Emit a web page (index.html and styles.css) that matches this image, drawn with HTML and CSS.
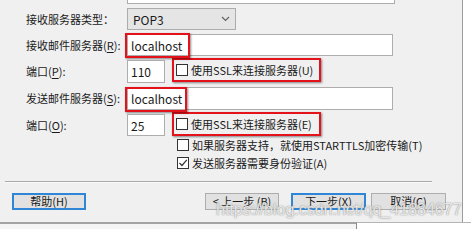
FILE: index.html
```html
<!DOCTYPE html>
<html lang="zh-CN">
<head>
<meta charset="utf-8">
<title>账户设置</title>
<link rel="stylesheet" href="styles.css">
</head>
<body>
<div class="screen">
  <div class="dialog">
    <div class="stub"></div>
    <div class="form">
      <div class="label">接收服务器类型：</div>
      <div class="ctrl">
        <div class="select"><span>POP3</span>
          <svg class="chev" width="9" height="6" viewBox="0 0 9 6"><polyline points="1,1 4.5,4.5 8,1" fill="none" stroke="#606060" stroke-width="1.1"/></svg>
        </div>
      </div>

      <div class="label">接收邮件服务器(<u>R</u>):</div>
      <div class="ctrl">
        <div class="input wide"><span>localhost</span><i class="mark"></i></div>
      </div>

      <div class="label">端口(<u>P</u>):</div>
      <div class="ctrl">
        <div class="input port"><span>110</span></div>
        <div class="cbox hl"><span class="box"></span><span>使用SSL来连接服务器(U)</span></div>
      </div>

      <div class="label">发送邮件服务器(<u>S</u>):</div>
      <div class="ctrl">
        <div class="input wide"><span>localhost</span><i class="mark m2"></i></div>
      </div>

      <div class="label">端口(<u>O</u>):</div>
      <div class="ctrl">
        <div class="input port"><span>25</span></div>
        <div class="cbox hl"><span class="box"></span><span>使用SSL来连接服务器(E)</span></div>
      </div>

      <div class="ctrl span2">
        <div class="cbox plain"><span class="box"></span><span>如果服务器支持，就使用STARTTLS加密传输(T)</span></div>
      </div>
      <div class="ctrl span2">
        <div class="cbox plain"><span class="box checked"><svg width="10" height="10" viewBox="0 0 10 10"><polyline points="1.5,5 4,7.5 8.8,1.8" fill="none" stroke="#333" stroke-width="1.2"/></svg></span><span>发送服务器需要身份验证(A)</span></div>
      </div>
    </div>

    <div class="sep"></div>

    <div class="buttons">
      <div class="btn focus">帮助(H)</div>
      <div class="group">
        <div class="btn">&lt; 上一步 (B)</div>
        <div class="btn focus next">下一步(X)</div>
        <div class="btn">取消(C)</div>
      </div>
    </div>

    <div class="watermark">https://blog.csdn.net/qq_41884677</div>
  </div>
  <div class="taskbar"><div class="tleft"></div><div class="tright"></div></div>
</div>
</body>
</html>
```
FILE: styles.css
```css
html, body {
  margin: 0;
  padding: 0;
  background: #ffffff;
}
.screen {
  width: 471px;
  height: 229px;
  overflow: hidden;
  font-family: "Noto Sans CJK SC", "Microsoft YaHei", sans-serif;
  font-size: 11px;
  color: #1a1a1a;
}
.dialog {
  position: relative;
  width: 463px;
  height: 222px;
  box-sizing: border-box;
  background: #f0f0f0;
  border-right: 1px solid #9c9c9c;
  overflow: hidden;
}
.stub {
  margin-left: 127px;
  width: 266px;
  height: 3px;
  background: #fff;
  border: 1px solid #adadad;
  border-top: none;
}
.form {
  margin-top: 4px;
  padding-left: 26px;
  display: grid;
  grid-template-columns: 101px 1fr;
  grid-template-rows: 22px 22px 23px 23px 22px 10px 18px;
  row-gap: 4px;
}
.form .span2 {
  grid-column: 2;
  padding-left: 50px;
}
.label {
  display: flex;
  align-items: center;
  white-space: nowrap;
  line-height: 1;
}
.label u {
  text-decoration-thickness: 1px;
  text-underline-offset: 2px;
}
.ctrl {
  display: flex;
  align-items: center;
}
.select {
  width: 109px;
  height: 22px;
  box-sizing: border-box;
  background: #e5e5e5;
  border: 1px solid #acacac;
  display: flex;
  align-items: center;
  justify-content: space-between;
  padding: 0 5px 0 5px;
  font-size: 12px;
}
.input {
  position: relative;
  height: 100%;
  box-sizing: border-box;
  background: #fff;
  border: 1px solid #adadad;
  display: flex;
  align-items: center;
  padding-left: 3px;
  font-size: 12px;
}
.input.wide {
  width: 266px;
}
.input.port {
  width: 38px;
}
.mark {
  position: absolute;
  left: -3px;
  top: -2px;
  width: 65px;
  height: 25px;
  box-sizing: border-box;
  border: 2px solid #e3121b;
  box-shadow: 1px 1px 2px rgba(0,0,0,0.45);
}
.mark.m2 {
  width: 62px;
  top: -1px;
}
.cbox {
  display: flex;
  align-items: center;
  gap: 3px;
  white-space: nowrap;
}
.cbox.hl {
  margin-left: 7px;
  width: 149px;
  height: 24px;
  box-sizing: border-box;
  border: 2px solid #e3121b;
  box-shadow: 1px 1px 2px rgba(0,0,0,0.45);
  padding-left: 2px;
  align-self: flex-start;
  margin-top: -2px;
}
.box {
  width: 12px;
  height: 12px;
  box-sizing: border-box;
  background: #fff;
  border: 1px solid #333;
  display: flex;
  align-items: center;
  justify-content: center;
  flex: none;
}
.sep {
  margin: 9px 0 0 5px;
  width: 427px;
  height: 0;
  border-top: 1px solid #a9a9a9;
  border-bottom: 1px solid #fbfbfb;
}
.buttons {
  display: flex;
  margin-top: 10px;
  padding: 0 16px 0 12px;
}
.group {
  margin-left: auto;
  display: flex;
}
.btn {
  width: 74px;
  height: 17px;
  box-sizing: border-box;
  background: #e1e1e1;
  border: 1px solid #adadad;
  display: flex;
  align-items: center;
  justify-content: center;
  white-space: nowrap;
  line-height: 1;
}
.btn.focus {
  border: 2px solid #2f86d6;
}
.btn.next {
  width: 75px;
  margin: 0 5px 0 12px;
}
.group .btn:last-child {
  width: 75px;
}
.watermark {
  position: absolute;
  left: 216px;
  top: 202px;
  font-family: "Liberation Sans", Arial, sans-serif;
  font-size: 16px;
  line-height: 1;
  color: rgba(255,255,255,0.8);
  text-shadow: 0 0 1px rgba(110,110,110,0.8), 0 0 2px rgba(150,150,150,0.5);
  white-space: nowrap;
}
.taskbar {
  display: flex;
  height: 7px;
}
.tleft {
  width: 356px;
  background: #f4f4f4;
  border-top: 2px solid #a3a3a3;
  border-right: 1px solid #8a8a8a;
}
.tright {
  flex: 1;
  background: #fff;
  border-top: 1px solid #b5b5b5;
}
```
